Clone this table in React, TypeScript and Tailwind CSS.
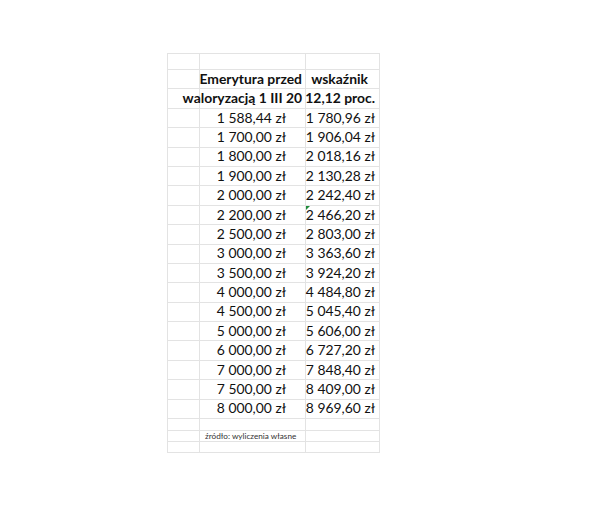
import React from 'react';

const rows: [string, string][] = [
    ['1 588,44 zł', '1 780,96 zł'],
    ['1 700,00 zł', '1 906,04 zł'],
    ['1 800,00 zł', '2 018,16 zł'],
    ['1 900,00 zł', '2 130,28 zł'],
    ['2 000,00 zł', '2 242,40 zł'],
    ['2 200,00 zł', '2 466,20 zł'],
    ['2 500,00 zł', '2 803,00 zł'],
    ['3 000,00 zł', '3 363,60 zł'],
    ['3 500,00 zł', '3 924,20 zł'],
    ['4 000,00 zł', '4 484,80 zł'],
    ['4 500,00 zł', '5 045,40 zł'],
    ['5 000,00 zł', '5 606,00 zł'],
    ['6 000,00 zł', '6 727,20 zł'],
    ['7 000,00 zł', '7 848,40 zł'],
    ['7 500,00 zł', '8 409,00 zł'],
    ['8 000,00 zł', '8 969,60 zł'],
];

const Row: React.FC<{ h: string; b?: React.ReactNode; c?: React.ReactNode; mark?: boolean }> = ({ h, b, c, mark }) => (
    <div className={`flex border-b border-[#e3e3e3] whitespace-nowrap ${h}`}>
        <div className="w-[32px] shrink-0 border-r border-[#e3e3e3]" />
        <div className="w-[106px] shrink-0 border-r border-[#e3e3e3] flex items-center justify-end pr-[19px] relative">{b}</div>
        <div className="w-[74px] shrink-0 border-r border-[#e3e3e3] flex items-center justify-end pr-[4px] relative">
            {mark && (
                <span className="absolute left-0 top-0 w-0 h-0 border-t-[4px] border-r-[4px] border-t-[#1e8a3a] border-r-transparent" />
            )}
            {c}
        </div>
    </div>
);

export default function App() {
    return (
        <div className="w-[600px] h-[516px] bg-white font-['Lato',sans-serif] text-[13.9px] text-[#111]">
            <div className="pt-[53px] pl-[167px]">
                <div className="w-[213px] border-l border-t border-[#e3e3e3]">
                    <Row h="h-[16px]" />
                    <Row
                        h="h-[19.4px]"
                        b={<span className="font-bold mr-[-16px]">Emerytura przed</span>}
                        c={<span className="font-bold mr-[7px]">wskaźnik</span>}
                    />
                    <Row
                        h="h-[19.4px]"
                        b={<span className="font-bold mr-[-16px]">waloryzacją 1 III 20</span>}
                        c={<span className="font-bold">12,12 proc.</span>}
                    />
                    {rows.map(([before, after], i) => (
                        <Row key={before} h="h-[19.4px]" b={before} c={after} mark={i === 5} />
                    ))}
                    <Row h="h-[12px]" />
                    <Row
                        h="h-[11px]"
                        b={<span className="absolute left-[5px] top-[-1px] text-[8.2px] text-[#333]">źródło: wyliczenia własne</span>}
                    />
                    <Row h="h-[11px]" />
                </div>
            </div>
        </div>
    );
}
